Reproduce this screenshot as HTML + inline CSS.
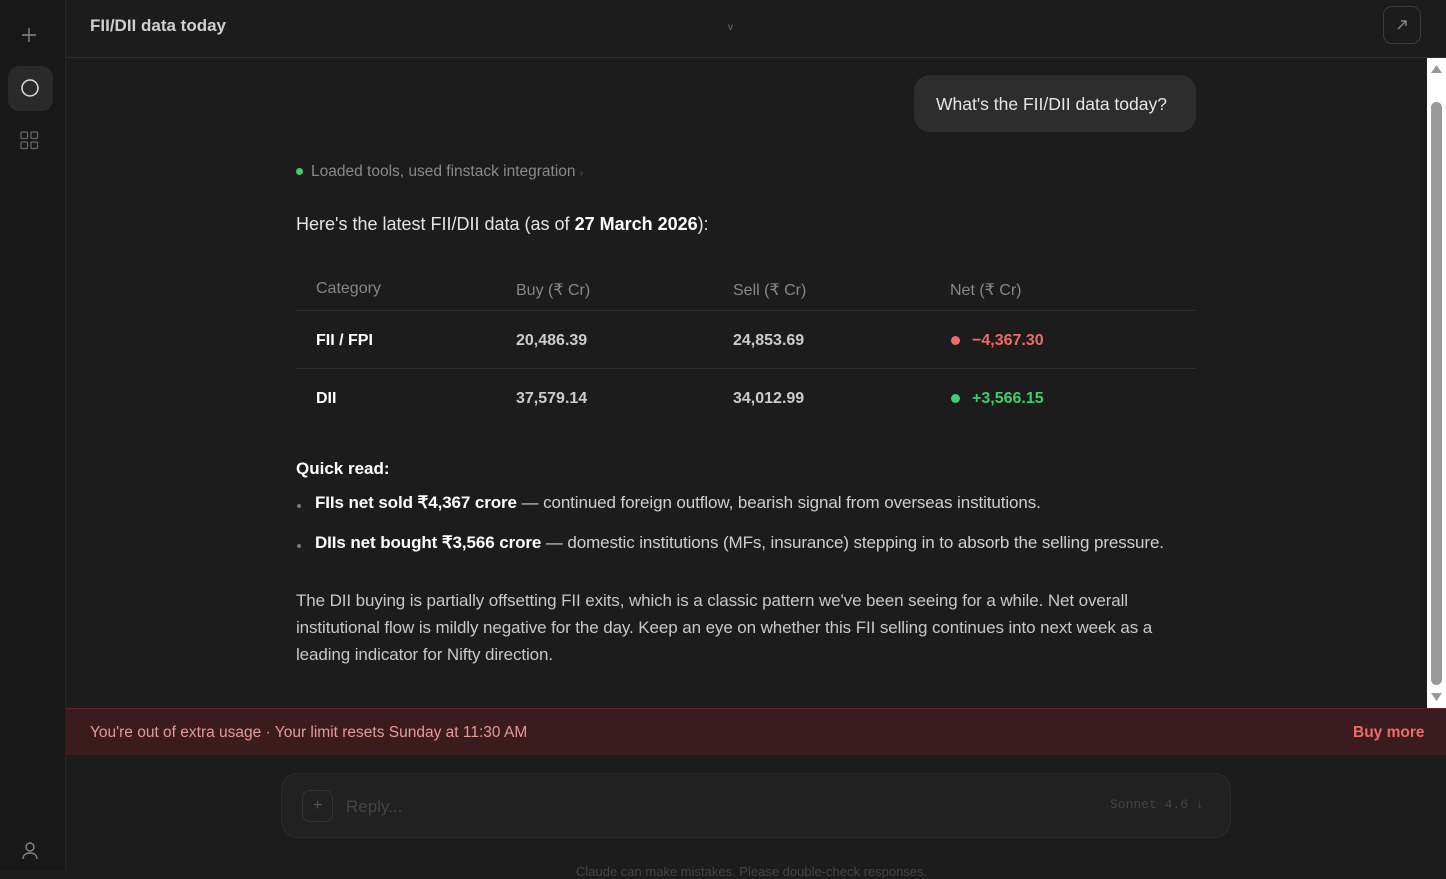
<!DOCTYPE html>
<html><head><meta charset="utf-8"><style>
*{box-sizing:border-box;margin:0;padding:0}
body{width:1446px;height:871px;overflow:hidden;background:#1c1c1c;font-family:"Liberation Sans",sans-serif;color:#d8d8d8;position:relative}
.side{position:absolute;left:0;top:0;width:66px;height:871px;background:#181818;border-right:1px solid #262626}
.top{position:absolute;left:66px;top:0;right:0;height:58px;border-bottom:1px solid #2e2e2e}
.abs{position:absolute}
.row{position:absolute;left:296px;width:900px;border-top:1px solid #2e2e2e}
.c{position:absolute;font-size:16px}
</style></head><body>
<div class="side">
 <svg class="abs" style="left:20px;top:26px" width="18" height="18"><path d="M9 2v14M2 9h14" stroke="#888" stroke-width="1.4"/></svg>
 <div class="abs" style="left:8px;top:66px;width:45px;height:45px;border-radius:11px;background:#2a2a2a"></div>
 <svg class="abs" style="left:20px;top:78px" width="20" height="20"><circle cx="10" cy="10" r="8" stroke="#ddd" stroke-width="1.5" fill="none"/></svg>
 <svg class="abs" style="left:20px;top:131px" width="20" height="20"><g stroke="#666" stroke-width="1.3" fill="none"><rect x="1" y="1" width="6.5" height="6.5" rx="1"/><rect x="11" y="1" width="6.5" height="6.5" rx="1"/><rect x="1" y="11" width="6.5" height="6.5" rx="1"/><rect x="11" y="11" width="6.5" height="6.5" rx="1"/></g></svg>
 <svg class="abs" style="left:20px;top:841px" width="20" height="20"><g stroke="#888" stroke-width="1.4" fill="none"><circle cx="10" cy="6" r="4"/><path d="M3 18c0-4 3-6 7-6s7 2 7 6"/></g></svg>
</div>
<div class="top">
 <div class="abs" style="left:24px;top:16px;font-size:17px;font-weight:bold;color:#cfcfcf">FII/DII data today</div>
 <div class="abs" style="left:662px;top:22px;font-size:10px;color:#777">v</div>
 <div class="abs" style="left:1317px;top:6px;width:38px;height:38px;border:1px solid #3a3a3a;border-radius:9px"></div>
 <svg class="abs" style="left:1329px;top:18px" width="14" height="14"><path d="M3 11L11 3M6 3h5v5" stroke="#888" stroke-width="1.4" fill="none"/></svg>
</div>
<div class="abs" style="left:914px;top:75px;width:282px;height:57px;background:#2d2d2d;border-radius:16px;font-size:17.5px;color:#e6e6e6;padding:19px 0 0 22px">What's the FII/DII data today?</div>
<div class="abs" style="left:296px;top:168px;width:7px;height:7px;border-radius:50%;background:#3ecf6a"></div>
<div class="abs" style="left:311px;top:163px;font-size:15.5px;color:#8a8a8a">Loaded tools, used finstack integration <span style="font-size:10px;color:#555">›</span></div>
<div class="abs" style="left:296px;top:214px;font-size:18px;color:#e4e4e4">Here's the latest FII/DII data (as of <b style="color:#fff">27 March 2026</b>):</div>
<div class="c" style="left:316px;top:280px;color:#888">Category</div>
<div class="c" style="left:516px;top:280px;color:#888">Buy (₹ Cr)</div>
<div class="c" style="left:733px;top:280px;color:#888">Sell (₹ Cr)</div>
<div class="c" style="left:950px;top:280px;color:#888">Net (₹ Cr)</div>
<div class="row" style="top:310px"></div>
<div class="row" style="top:368px"></div>
<div class="c" style="left:316px;top:332px;font-weight:bold;color:#fff">FII / FPI</div>
<div class="c" style="left:516px;top:332px;font-weight:bold;color:#ccc">20,486.39</div>
<div class="c" style="left:733px;top:332px;font-weight:bold;color:#ccc">24,853.69</div>
<div class="abs" style="left:951px;top:336px;width:9px;height:9px;border-radius:50%;background:#f06a6a"></div>
<div class="c" style="left:972px;top:332px;font-weight:bold;color:#f06a6a">−4,367.30</div>
<div class="c" style="left:316px;top:390px;font-weight:bold;color:#fff">DII</div>
<div class="c" style="left:516px;top:390px;font-weight:bold;color:#ccc">37,579.14</div>
<div class="c" style="left:733px;top:390px;font-weight:bold;color:#ccc">34,012.99</div>
<div class="abs" style="left:951px;top:394px;width:9px;height:9px;border-radius:50%;background:#3ecf6a"></div>
<div class="c" style="left:972px;top:390px;font-weight:bold;color:#3ecf6a">+3,566.15</div>
<div class="abs" style="left:296px;top:459px;font-size:17px;font-weight:bold;color:#fff">Quick read:</div>
<div class="abs" style="left:297px;top:504px;width:4px;height:4px;border-radius:50%;background:#777"></div>
<div class="abs" style="left:315px;top:493px;font-size:17px;color:#cfcfcf;letter-spacing:-.1px"><b style="color:#fff">FIIs net sold ₹4,367 crore</b> — continued foreign outflow, bearish signal from overseas institutions.</div>
<div class="abs" style="left:297px;top:544px;width:4px;height:4px;border-radius:50%;background:#777"></div>
<div class="abs" style="left:315px;top:533px;font-size:17px;color:#cfcfcf;letter-spacing:-.1px"><b style="color:#fff">DIIs net bought ₹3,566 crore</b> — domestic institutions (MFs, insurance) stepping in to absorb the selling pressure.</div>
<div class="abs" style="left:296px;top:587px;width:862px;font-size:17px;line-height:27px;color:#c8c8c8;letter-spacing:-.1px">The DII buying is partially offsetting FII exits, which is a classic pattern we've been seeing for a while. Net overall institutional flow is mildly negative for the day. Keep an eye on whether this FII selling continues into next week as a leading indicator for Nifty direction.</div>
<div class="abs" style="left:1427px;top:58px;width:19px;height:650px;background:#fff"></div>
<svg class="abs" style="left:1429px;top:62px" width="15" height="12"><path d="M2 11L7.5 3 13 11z" fill="#999"/></svg>
<div class="abs" style="left:1431px;top:102px;width:11px;height:583px;border-radius:6px;background:#999"></div>
<svg class="abs" style="left:1429px;top:692px" width="15" height="12"><path d="M2 1L7.5 9 13 1z" fill="#999"/></svg>
<div class="abs" style="left:66px;top:708px;width:1380px;height:47px;background:#3a1c1e;border-top:1px solid #5a2626"></div>
<div class="abs" style="left:90px;top:724px;font-size:15.5px;color:#e59a9a">You're out of extra usage · Your limit resets Sunday at 11:30 AM</div>
<div class="abs" style="left:1353px;top:724px;font-size:15.5px;font-weight:bold;color:#ef6b6b">Buy more</div>
<div class="abs" style="left:281px;top:773px;width:950px;height:65px;background:#212121;border:1px solid #2a2a2a;border-radius:16px"></div>
<div class="abs" style="left:302px;top:790px;width:31px;height:32px;border:1px solid #333;border-radius:8px;color:#555;font-size:16px;text-align:center;line-height:30px">+</div>
<div class="abs" style="left:346px;top:797px;font-size:17px;color:#444">Reply...</div>
<div class="abs" style="left:1110px;top:797px;font-size:13px;color:#444;font-family:'Liberation Mono',monospace">Sonnet 4.6 ↓</div>
<div class="abs" style="left:576px;top:864px;font-size:13px;color:#444">Claude can make mistakes. Please double-check responses.</div>
</body></html>
